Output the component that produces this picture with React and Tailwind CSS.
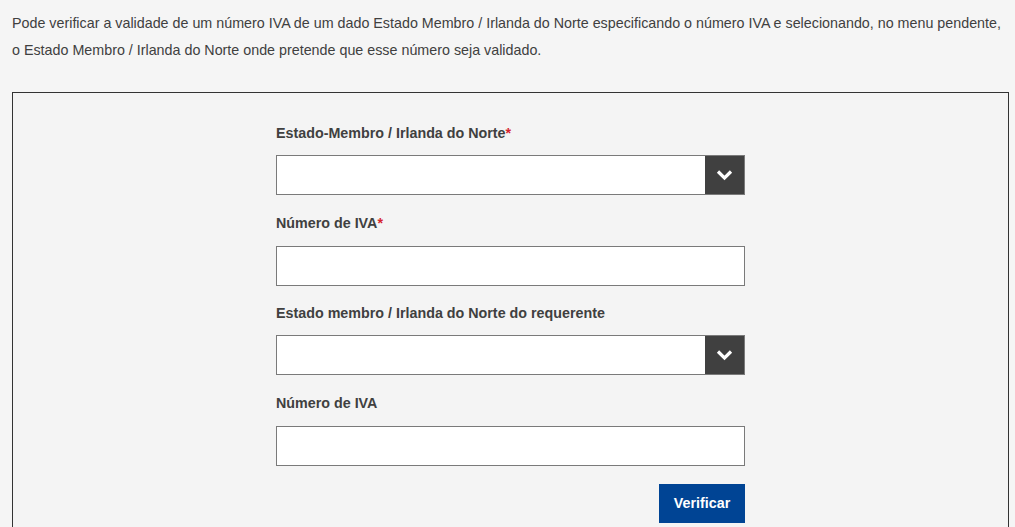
function Label({ children, required }) {
  return (
    <label className="block text-[14.3px] font-bold leading-5 text-[#404040]">
      {children}
      {required && <span className="text-[#d62430]">*</span>}
    </label>
  );
}

function SelectField() {
  return (
    <div className="mt-[12px] flex h-[40px] border border-[#7a7a7a] bg-white">
      <div className="flex-1" />
      <div className="flex w-[39px] items-center justify-center bg-[#404040]">
        <svg width="17" height="12" viewBox="0 0 17 12" fill="none">
          <path d="M2 2.5 L8.5 9 L15 2.5" stroke="white" strokeWidth="3.2" />
        </svg>
      </div>
    </div>
  );
}

function TextField() {
  return <input type="text" className="mt-[13px] block h-[40px] w-full border border-[#7a7a7a] bg-white outline-none" />;
}

export default function App() {
  return (
    <div className="min-h-screen bg-[#f5f5f5] px-[12px] pt-[10px] font-['Liberation_Sans',Arial,sans-serif] text-[#404040]">
      <p className="w-[1000px] text-[14.3px] leading-[27px]">
        Pode verificar a validade de um número IVA de um dado Estado Membro / Irlanda do Norte especificando o número IVA e selecionando, no menu pendente, o Estado Membro / Irlanda do Norte onde pretende que esse número seja validado.
      </p>
      <div className="mt-[28px] w-[997px] border border-[#333] bg-[#f4f4f4] pt-[30px] pb-[20px]">
        <div className="mx-auto w-[469px]">
          <Label required>Estado-Membro / Irlanda do Norte</Label>
          <SelectField />
          <div className="mt-[18px]">
            <Label required>Número de IVA</Label>
          </div>
          <TextField />
          <div className="mt-[17px]">
            <Label>Estado membro / Irlanda do Norte do requerente</Label>
          </div>
          <SelectField />
          <div className="mt-[18px]">
            <Label>Número de IVA</Label>
          </div>
          <TextField />
          <div className="mt-[18px] flex justify-end">
            <button className="h-[39px] w-[86px] bg-[#004494] text-[14.3px] font-bold text-white">Verificar</button>
          </div>
        </div>
      </div>
    </div>
  );
}
